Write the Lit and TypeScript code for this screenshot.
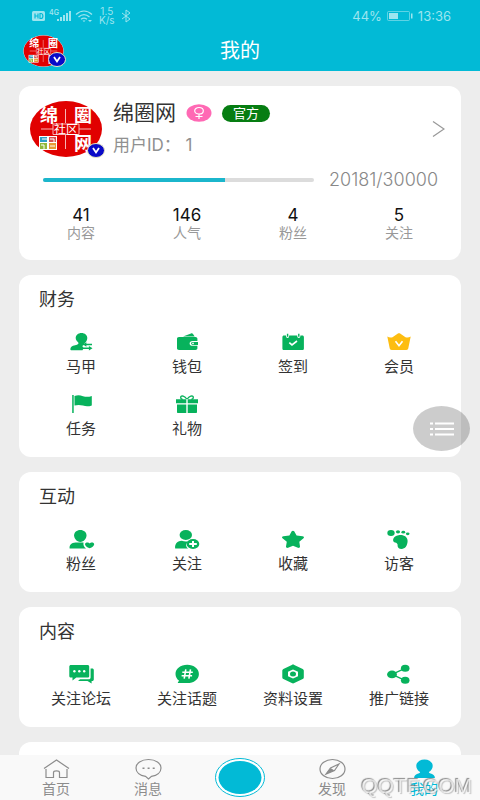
import { LitElement, html, css, svg, nothing } from "lit";
import { customElement } from "lit/decorators.js";

type Entry = { label: string; icon: keyof typeof icons; gold?: boolean };
type Section = { title: string; entries: Entry[] };

const icons = {
  swap: svg`
    <path d="M14.500 4c3.400 0 5.800 2.200 5.800 5 0 2.200-1.200 4-2.500 5.100-.6.6-.6 1.100-.3 1.500l-2.200 1.400 1.300 2.200-1.100 2H4c-1 0-.8-2.400.4-3.500 1.800-1.600 5.800-1.700 6.800-2.800.5-.6.2-1.200-.3-1.800C9.700 12 8.700 10.600 8.700 9c0-2.800 2.400-5 5.800-5z"/>
    <path d="M16 15.500l3.400-2.300v1.600h5.600v1.400h-5.600v1.500zM25.500 19.300l-3.600-2.200v1.500h-6v1.400h6v1.500z"/>`,
  wallet: svg`
    <path d="M10 7.500l8-3.100c.9-.3 1.700 0 2.200.8l1.500 2.300z"/>
    <path d="M6 8h16.500c1 0 1.900.8 1.900 1.700v2.400h-4.800c-2 0-3 1-3 2.300s1 2.400 3 2.400h4.800v2.500c0 1-.9 1.700-1.900 1.700H6c-1.200 0-2-.8-2-1.700V9.700C4 8.800 4.800 8 6 8z"/>
    <path d="M20 13h5v2.900h-5c-1 0-1.900-.6-1.900-1.500S19 13 20 13z"/><circle class="hole" cx="20" cy="14.400" r="0.900"/>`,
  calendar: svg`
    <path d="M5 6.500h2c0 1.700.6 2.500 1.600 2.500s1.600-.8 1.600-2.500h8c0 1.700.6 2.500 1.600 2.500s1.600-.8 1.600-2.500h2c.8 0 1.500.6 1.500 1.500v11.400c0 1-.7 1.600-1.500 1.600H5c-.9 0-1.600-.6-1.600-1.600V8c0-.9.700-1.500 1.600-1.500z"/>
    <path d="M7.900 4.800h1.400v3H7.900zM19.100 4.800h1.400v3h-1.400z"/>
    <path class="cut" d="M10.300 13.600l2.700 2.300 5-3.900"/>`,
  crown: svg`
    <path d="M2.300 7.600c1.600.9 3.400 1.100 5.200.6l5.400-3.700c.8-.5 1.500-.5 2.200 0l5.400 3.700c1.800.5 3.600.3 5.200-.6l-2.400 11.600c-.2 1.100-.9 1.700-2 1.700H6.700c-1.100 0-1.800-.6-2-1.700z"/>
    <path class="cut" d="M10.500 12.200l3.500 4.600 3.500-4.600"/>`,
  flag: svg`
    <path d="M5.200 4h1.500v18H5.200z"/>
    <path d="M7.500 5c3.600-1.400 5.600-.8 8.500.2 3.300 1 5.800.8 8.800-.2v9.400c-3.200 1.200-5.800 1.200-8.900.2-3-.9-5.300-1-8.400 0z"/>`,
  gift: svg`
    <path d="M3 8.300h10.300v4H3zM14.700 8.300H25v4H14.700zM4 13.500h9.300V22H5c-.6 0-1-.4-1-1zM14.700 13.500H24V21c0 .6-.4 1-1 1h-8.300z"/>
    <path class="line" d="M13.700 8C12 5 8 4 7.700 6.200c-.1 1 .8 1.900 2 2.100M14.300 8c1.700-3 5.700-4 6-1.800.1 1-.8 1.900-2 2.100"/>`,
  fans: svg`
    <path d="M13.300 4c3.600 0 6.200 2.300 6.200 5.300 0 3.300-2.600 6.700-6.200 6.700S7.100 12.600 7.100 9.300C7.100 6.300 9.700 4 13.300 4z"/>
    <path d="M2.600 22.500c-.3-3.700 1.900-5.500 5.900-5.900h8c-.4 2.300.3 4.500 2.500 5.900z"/>
    <path d="M22.700 22.300c-2.800-1.200-4.700-2.600-4.700-4.100 0-2 3.400-2.500 4.700-.7 1.200-1.800 4.500-1.300 4.500.7 0 1.500-1.800 2.900-4.500 4.100z"/>`,
  follow: svg`
    <ellipse cx="12.800" cy="9" rx="6.200" ry="5"/>
    <path d="M2.200 22.500c-.6-3.900 1.400-7.400 6.600-7.800 2.600 1 5.500 1 7.200.2-3.600 2.300-3.500 5.700-.9 7.600z"/>
    <ellipse cx="20" cy="18" rx="6.300" ry="5"/>
    <path class="cut wide" d="M20 14.900v6.200M16.200 18h7.600"/>`,
  star: svg`<path d="M12.700 5.300c.6-.9 1.900-.9 2.500 0l2.400 4.100 6 .8c1.300.2 1.800 1.300.9 2.100l-4.200 3.500.7 4.700c.1 1.100-1 1.800-2.100 1.300L14 19.800l-4.900 2c-1.100.5-2.200-.2-2.100-1.300l.8-4.700-4.300-3.500c-.9-.8-.4-1.900.9-2.100l6-.8z"/>`,
  foot: svg`
    <ellipse cx="6" cy="7" rx="3.700" ry="3"/><ellipse cx="13" cy="5.800" rx="2.100" ry="1.600"/>
    <ellipse cx="18.300" cy="6.200" rx="1.900" ry="1.400"/><ellipse cx="22.700" cy="7.800" rx="1.800" ry="1.400"/>
    <path d="M13.500 9.300c5-.9 9.100 1.600 9.100 5.700 0 4.400-2.500 8-6 8-2.700 0-4.200-1.500-4-3.400.2-2-.9-2.700-2.600-3.100-3.500-.9-2-6.500 3.500-7.200z"/>`,
  forum: svg`
    <path d="M4 4h16.500c1 0 1.700.6 1.700 1.600V15c0 1-.7 1.600-1.700 1.600H9.300L5.500 19.500v-2.900H4c-1 0-1.700-.6-1.700-1.600V5.600C2.300 4.600 3 4 4 4z"/>
    <path d="M23.600 7.500h1.600c1 0 1.600.6 1.600 1.500v9.500c0 .9-.6 1.500-1.600 1.500h-.6v2.500L20.500 20H11l2-1.700h8.700c1.200 0 1.900-.7 1.900-1.800z"/>
    <circle class="hole" cx="7.400" cy="10.300" r="1.200"/><circle class="hole" cx="12.300" cy="10.300" r="1.200"/><circle class="hole" cx="17.200" cy="10.300" r="1.200"/>`,
  topic: svg`
    <path d="M14.200 3.700c6.700 0 11.700 4 11.700 9.200s-5 9.200-11.700 9.200H5.500c-.7 0-.9-.6-.4-1l1-1.300c-2.200-1.700-3.600-4.100-3.600-6.900 0-5.200 5-9.200 11.700-9.200z"/>
    <path class="cut" d="M12.800 8.300l-1.600 9.400M17.500 8.300l-1.600 9.400M9.300 11.200h10.500M8.600 14.700h10.500"/>`,
  settings: svg`
    <path d="M12.800 3.900c.8-.4 1.700-.4 2.500 0l8.400 4c.7.4 1.100.9 1.100 1.600v7c0 .7-.4 1.200-1.100 1.600l-8.400 4c-.8.4-1.700.4-2.500 0l-8.400-4c-.7-.4-1.100-.9-1.100-1.600v-7c0-.7.4-1.200 1.100-1.600z"/>
    <path class="hole" d="M14 8.500l5 2.200v4.600l-5 2.200-5-2.200v-4.600z"/><ellipse cx="14" cy="13" rx="3" ry="2.500"/>`,
  share: svg`
    <path class="line" d="M7 13.400l13-6M7 13.400l13 6"/>
    <ellipse cx="7" cy="13.400" rx="4.900" ry="3.900"/><ellipse cx="20.200" cy="7.300" rx="4.300" ry="3.500"/><ellipse cx="20.200" cy="19.300" rx="4.300" ry="3.500"/>`,
};

const sections: Section[] = [
  {
    title: "财务",
    entries: [
      { label: "马甲", icon: "swap" },
      { label: "钱包", icon: "wallet" },
      { label: "签到", icon: "calendar" },
      { label: "会员", icon: "crown", gold: true },
      { label: "任务", icon: "flag" },
      { label: "礼物", icon: "gift" },
    ],
  },
  {
    title: "互动",
    entries: [
      { label: "粉丝", icon: "fans" },
      { label: "关注", icon: "follow" },
      { label: "收藏", icon: "star" },
      { label: "访客", icon: "foot" },
    ],
  },
  {
    title: "内容",
    entries: [
      { label: "关注论坛", icon: "forum" },
      { label: "关注话题", icon: "topic" },
      { label: "资料设置", icon: "settings" },
      { label: "推广链接", icon: "share" },
    ],
  },
];

const stats = [
  { value: "41", label: "内容" },
  { value: "146", label: "人气" },
  { value: "4", label: "粉丝" },
  { value: "5", label: "关注" },
];

@customElement("user-avatar")
class UserAvatar extends LitElement {
  static styles = css`
    :host { display: block; position: relative; }
    .face { display: block; width: 100%; height: 100%; }
    .badge { position: absolute; right: -2px; bottom: 0; width: 18px; height: 15px; }
    .glyph { font: 700 18px "Noto Sans CJK SC", sans-serif; fill: #fff; text-anchor: middle; }
    .small { font: 400 12px "Noto Sans CJK SC", sans-serif; }
  `;
  render() {
    return html`
      <svg class="face" viewBox="0 0 74 58" role="img" aria-label="绵圈网">
        <ellipse cx="37" cy="29" rx="36.500" ry="28.500" fill="#fff" />
        <ellipse cx="37" cy="29" rx="36" ry="28" fill="#e10000" />
        <text class="glyph" x="20" y="22">绵</text>
        <text class="glyph" x="54" y="22">圈</text>
        <text class="glyph" x="54" y="50">网</text>
        <path d="M36.500 9v14M36.500 35v14M12 29h12M50 29h12M24 24h26v10.500H24z" stroke="#f6b4b4" fill="none" />
        <text class="glyph small" x="37" y="34">社区</text>
        <rect x="10" y="36" width="18" height="14" fill="#fff" />
        <path d="M11 37h7v5h-7z" fill="#319fc6" /><path d="M20 37h7v5h-7z" fill="#d85252" />
        <path d="M11 43h7v6h-7z" fill="#91b83d" /><path d="M20 43h7v6h-7z" fill="#e89a35" />
        <path d="M13 39h5M12 45h3v4M21 39h4v3M21 46h5" stroke="#fff" fill="none" />
      </svg>
      <svg class="badge" viewBox="0 0 18 15" aria-hidden="true">
        <ellipse cx="9" cy="7.500" rx="8.500" ry="7" fill="#0a0ac8" stroke="#e9e7c0" />
        <path d="M6 5l3 4.500L12 5" stroke="#fff" stroke-width="1.800" fill="none" />
      </svg>
    `;
  }
}

@customElement("entry-section")
class EntrySection extends LitElement {
  static properties = { section: { attribute: false } };
  declare section: Section;
  static styles = css`
    :host { display: block; padding: 12px 9px 16px; background: #fff; border-radius: 12px; }
    .title { margin: 0 0 16px 11px; font-size: 18px; line-height: 26px; font-weight: 400; color: #333; }
    .grid { display: grid; grid-template-columns: repeat(4, 1fr); row-gap: 12px; }
    .entry { display: flex; flex-direction: column; align-items: center; padding: 0; border: 0; background: none; font: inherit; font-size: 15px; line-height: 24px; color: #333; white-space: nowrap; }
    .icon { width: 28px; height: 26px; fill: #07b25c; color: #07b25c; }
    .gold { fill: #fdbd10; color: #fdbd10; }
    .hole { fill: #fff; }
    .cut { fill: none; stroke: #fff; stroke-width: 1.6; }
    .wide { stroke-width: 2; }
    .line { fill: none; stroke: currentColor; stroke-width: 1.3; }
  `;
  render() {
    return html`
      <h2 class="title">${this.section.title}</h2>
      <div class="grid">
        ${this.section.entries.map(
          (e) => html`<button class="entry" type="button">
            <svg class="icon ${e.gold ? "gold" : ""}" viewBox="0 0 28 26" aria-hidden="true">${icons[e.icon]}</svg>
            <span>${e.label}</span>
          </button>`
        )}
      </div>
    `;
  }
}

const tabs = [
  { label: "首页", icon: svg`<path d="M3 11.500L15.500 3 28 11.500M5 12v8.500h7.500v-5c0-2.200 6-2.200 6 0v5H26V12" />` },
  { label: "消息", icon: svg`<path d="M15.500 2.500c7.200 0 12.500 3.700 12.500 8.500 0 4.300-3.800 7.600-9.500 8.400L15.500 22l-3-2.600C6.800 18.600 3 15.300 3 11c0-4.800 5.300-8.500 12.500-8.500z"/><path class="solid" d="M9.500 10.500h2v1.600h-2zM14.600 10.500h2v1.600h-2zM19.700 10.500h2v1.600h-2z"/>` },
  { label: "", icon: nothing },
  { label: "发现", icon: svg`<ellipse cx="15.500" cy="12" rx="12.500" ry="9.500"/><path d="M22 7l-4.500 6.500L9 17l4.500-6z"/><path class="solid" d="M9 17l4.500-6 4 2.500z"/>` },
  { label: "我的", icon: svg`<path class="solid" d="M15.500 2.500c4.700 0 8.200 2.700 8.200 6.500 0 2.500-1.500 4.500-3.400 5.700-.8.600-.4 1.200.6 1.500 3.200.8 5 2.200 5 4.800H5.100c0-2.600 1.800-4 5-4.800 1-.3 1.400-.9.600-1.500C8.800 13.500 7.300 11.500 7.300 9c0-3.800 3.500-6.500 8.200-6.500z"/>` },
];

@customElement("app-root")
class AppRoot extends LitElement {
  static styles = css`
    :host { display: flex; flex-direction: column; height: 100vh; overflow: hidden; background: #ededed; font-family: Inter, "Noto Sans CJK SC", sans-serif; color: #333; }
    .top { flex: none; background: #02bad6; color: #fff; }
    .status { display: flex; align-items: center; justify-content: space-between; height: 31px; padding: 0 29px 0 32px; box-sizing: border-box; color: #9de5ef; font-size: 13px; line-height: 16px; }
    .group { display: flex; align-items: center; gap: 5px; }
    .signals { width: 62px; height: 16px; }
    .rate { font-size: 10px; line-height: 9px; text-align: center; }
    .bluetooth { width: 12px; height: 14px; }
    .battery { width: 26px; height: 12px; }
    .bar { display: grid; grid-template-columns: 1fr auto 1fr; align-items: center; height: 40px; padding: 0 23px; }
    .bar h1 { margin: 0; font-size: 20px; line-height: 24px; font-weight: 400; }
    .mini { width: 41px; height: 32px; }
    .page { flex: 1; min-height: 0; display: flex; flex-direction: column; gap: 15px; padding: 15px 19px 0; overflow: hidden; }
    .card { flex: none; padding: 14px 9px 19px; border-radius: 12px; background: #fff; }
    entry-section { flex: none; }
    .profile { display: flex; align-items: center; gap: 10px; padding: 0 7px 0 1px; }
    .avatar { flex: none; width: 74px; height: 58px; }
    .who { flex: 1; min-width: 0; }
    .line { display: flex; align-items: center; gap: 10px; height: 26px; }
    .name { font-size: 21px; line-height: 26px; }
    .gender { width: 26px; height: 18px; }
    .official { padding: 0 11px; border-radius: 9px; background: #067d12; color: #fff; font-size: 13px; line-height: 17px; }
    .id { margin-top: 6px; font-size: 17px; line-height: 26px; color: #909090; }
    .more { padding: 0; border: 0; background: none; line-height: 0; }
    .chevron { width: 14px; height: 18px; }
    .level { display: flex; align-items: center; gap: 15px; margin: 12px 14px 0 15px; font-size: 18px; font-weight: 300; line-height: 20px; color: #888; }
    .track { flex: 1; height: 4px; border-radius: 2px; background: #dcdcdc; overflow: hidden; }
    .fill { height: 100%; background: #1bb6cc; }
    .stats { display: grid; grid-template-columns: repeat(4, 1fr); margin: 15px 0 0; }
    .stat { display: flex; flex-direction: column-reverse; align-items: center; }
    .stat dd { margin: 0; font-size: 17px; line-height: 20px; color: #111; }
    .stat dt { font-size: 14px; line-height: 16px; color: #999; }
    .next { height: 40px; box-sizing: border-box; }
    .tabs { flex: none; display: grid; grid-template-columns: repeat(5, 1fr); height: 45px; padding: 0 10px; background: #f9f9f9; }
    .tab { display: flex; flex-direction: column; align-items: center; justify-content: flex-end; padding-bottom: 4px; font-size: 14px; line-height: 14px; color: #8c8c8c; text-decoration: none; }
    .tab svg { width: 31px; height: 24px; margin-bottom: 1px; fill: none; stroke: currentColor; stroke-width: 1.2; }
    .tab .solid { fill: currentColor; stroke: none; }
    .tab.active { color: #02bad6; }
    .publish { place-self: center; padding: 0; border: 0; background: none; line-height: 0; }
    .publish svg { width: 50px; height: 39px; }
    .fab { position: fixed; right: 10px; top: 406px; width: 57px; height: 45px; padding: 0; border: 0; border-radius: 50%; background: rgba(0, 0, 0, 0.2); line-height: 0; }
    .fab svg { width: 24px; height: 16px; }
    .mark { position: fixed; right: 8px; bottom: 2px; font: 21px/24px "Liberation Sans", Arial, sans-serif; color: rgba(255, 255, 255, 0.7); text-shadow: -1px -1px 1px rgba(90, 90, 90, 0.7), 1px 1px 1px rgba(120, 120, 120, 0.4); pointer-events: none; }
  `;

  render() {
    return html`
      <header class="top">
        <div class="status">
          <div class="group">
            <svg class="signals" viewBox="0 0 62 16" fill="currentColor" aria-hidden="true">
              <rect y="3" width="13" height="10" rx="1.500" />
              <path d="M3 5.500v5M6 5.500v5M3 8h3M8 5.500v5h1c2.500 0 2.500-5 0-5z" stroke="#02bad6" stroke-width="1.200" fill="none" />
              <text x="17" y="7" font-size="7" font-weight="600">4G</text>
              <path d="M25 11h2v2h-2zM28 9h2v4h-2zM31 7h2v6h-2zM34 5h2v8h-2zM37 3h2v10h-2z" />
              <path d="M44 6.500c5-4.500 11-4.500 16 0M46.500 9c3.500-3 7.500-3 11 0M49 11.300c2-1.600 4-1.600 6 0" fill="none" stroke="currentColor" stroke-width="1.300" />
              <path d="M50.500 12.500h3L52 14zM56 12h4l-2 2z" />
            </svg>
            <div class="rate">1.5<br />K/s</div>
            <svg class="bluetooth" viewBox="0 0 12 14" fill="none" stroke="currentColor" aria-hidden="true"><path d="M2 4l8 6-4 3V1l4 3-8 6" /></svg>
          </div>
          <div class="group">
            <span>44%</span>
            <svg class="battery" viewBox="0 0 26 12" aria-hidden="true">
              <rect x="0.500" y="1.500" width="22" height="9" rx="1" fill="none" stroke="currentColor" opacity="0.600" />
              <path d="M2 3h9v6H2zM24 3.500h1.500v5H24z" fill="currentColor" />
            </svg>
            <span>13:36</span>
          </div>
        </div>
        <div class="bar"><user-avatar class="mini"></user-avatar><h1>我的</h1></div>
      </header>

      <main class="page">
        <section class="card">
          <div class="profile">
            <user-avatar class="avatar"></user-avatar>
            <div class="who">
              <div class="line">
                <span class="name">绵圈网</span>
                <svg class="gender" viewBox="0 0 26 18" role="img" aria-label="女">
                  <ellipse cx="13" cy="9" rx="12.500" ry="8.700" fill="#ff69b4" />
                  <path d="M13 10v5M9.500 12.500h7M13 3.500c2.600 0 4.300 1.400 4.300 3.200S15.600 10 13 10 8.700 8.500 8.700 6.700 10.400 3.500 13 3.500z" fill="none" stroke="#fff" stroke-width="1.200" />
                </svg>
                <span class="official">官方</span>
              </div>
              <div class="id">用户ID： 1</div>
            </div>
            <button class="more" type="button" aria-label="个人主页">
              <svg class="chevron" viewBox="0 0 14 18" fill="none" stroke="#999" stroke-width="1.300"><path d="M2 1.500L13 9 2 16.500" /></svg>
            </button>
          </div>
          <div class="level">
            <div class="track" role="progressbar" aria-valuenow="20181" aria-valuemax="30000" aria-label="等级"><div class="fill" style="width:${(20181 / 30000) * 100}%"></div></div>
            <span>20181/30000</span>
          </div>
          <dl class="stats">
            ${stats.map((s) => html`<div class="stat"><dt>${s.label}</dt><dd>${s.value}</dd></div>`)}
          </dl>
        </section>
        ${sections.map((s) => html`<entry-section .section=${s}></entry-section>`)}
        <section class="card next"></section>
      </main>

      <nav class="tabs">
        ${tabs.map((t, i) =>
          t.label
            ? html`<a class="tab ${i === 4 ? "active" : ""}" href="#"><svg viewBox="0 0 31 24" aria-hidden="true">${t.icon}</svg>${t.label}</a>`
            : html`<button class="publish" type="button" aria-label="发布">
                <svg viewBox="0 0 50 39"><ellipse cx="25" cy="19.500" rx="24.500" ry="19" fill="#fff" stroke="#02bad6" /><ellipse cx="25" cy="19.500" rx="21.500" ry="16.500" fill="#02bad6" /></svg>
              </button>`
        )}
      </nav>

      <button class="fab" type="button" aria-label="菜单">
        <svg viewBox="0 0 24 16" stroke="#fff" stroke-width="2" fill="none"><path d="M0 2.500h3M5 2.500h19M0 8h3M5 8h19M0 13.500h3M5 13.500h19" /></svg>
      </button>
      <div class="mark">QQTF.COM</div>
    `;
  }
}
